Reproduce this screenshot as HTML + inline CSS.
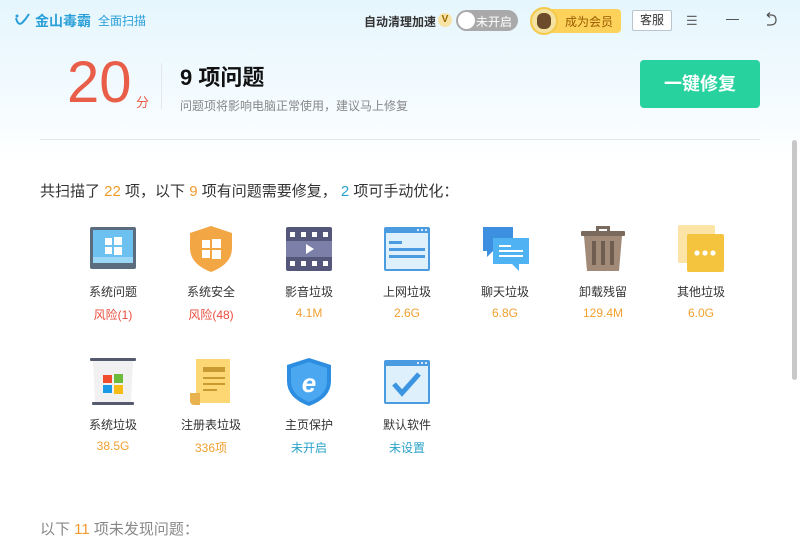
<!DOCTYPE html><html><head><meta charset="utf-8"><style>
*{margin:0;padding:0;box-sizing:border-box}
body{width:800px;height:560px;overflow:hidden;background:#fff;font-family:"Liberation Sans","Noto Sans CJK SC",sans-serif;position:relative}
.top{position:absolute;left:0;top:0;width:800px;height:160px;background:linear-gradient(#e6f6fd,#f3fbff 60%,#fff)}
.a{position:absolute;white-space:nowrap}
.it{position:absolute;width:98px;text-align:center}
.it svg{display:block;margin:0 auto;width:50px;height:50px}
.lb{font-size:12px;color:#333;margin-top:9px}
.v{font-size:12px;margin-top:6px}
</style></head><body>
<div class="top"></div>
<svg class="a" style="left:14px;top:12px" width="18" height="16" viewBox="0 0 18 16"><path d="M2 6 Q4 14 8 11 Q12 7 15 2" stroke="#2a9fd8" stroke-width="2" fill="none"/><circle cx="3" cy="4" r="1.5" fill="#2a9fd8"/></svg>
<div class="a" style="left:35px;top:11px;font-size:14px;color:#2a9fd8;font-weight:bold">金山毒霸</div>
<div class="a" style="left:98px;top:12px;font-size:12px;color:#2a9fd8">全面扫描</div>
<div class="a" style="left:364px;top:13px;font-size:12px;color:#333;font-weight:bold">自动清理加速</div>
<div class="a" style="left:438px;top:13px;width:14px;height:14px;border-radius:7px;background:#f7e3a6;color:#9a6a00;font-size:10px;text-align:center;line-height:14px;font-weight:bold">V</div>
<div class="a" style="left:456px;top:10px;width:62px;height:21px;border-radius:11px;background:#a9a9a9"></div>
<div class="a" style="left:458px;top:12px;width:17px;height:17px;border-radius:9px;background:#fff"></div>
<div class="a" style="left:476px;top:13px;font-size:12px;color:#fff">未开启</div>
<div class="a" style="left:540px;top:9px;width:81px;height:24px;border-radius:4px;background:#fcd25a"></div>
<div class="a" style="left:530px;top:7px;width:28px;height:28px;border-radius:14px;background:#f6e2a0;border:2px solid #f3c94a"><div style="width:14px;height:16px;margin:4px auto;background:#6b4b2a;border-radius:6px"></div></div>
<div class="a" style="left:565px;top:13px;font-size:12px;color:#9a5a00">成为会员</div>
<div class="a" style="left:632px;top:10px;width:40px;height:21px;border:1px solid #b9c6cf;border-radius:2px;font-size:12px;color:#333;text-align:center;line-height:19px;background:#fff">客服</div>
<div class="a" style="left:686px;top:13px;font-size:13px;color:#666">☰</div>
<div class="a" style="left:726px;top:19px;width:13px;height:1px;background:#555"></div>
<svg class="a" style="left:764px;top:12px" width="14" height="14" viewBox="0 0 14 14"><path d="M3 3 L7 3 Q12 3 12 8 Q12 13 6 13 L3 13 M3 3 L6 0.5 M3 3 L6 5.5" stroke="#555" fill="none" stroke-width="1.2"/></svg>

<div class="a" style="left:67px;top:50px;font-size:58px;color:#e95e48;line-height:66px">20</div>
<div class="a" style="left:136px;top:92px;font-size:13px;color:#e95e48">分</div>
<div class="a" style="left:161px;top:63px;width:1px;height:46px;background:#e4e8ec"></div>
<div class="a" style="left:180px;top:60px;font-size:22px;color:#111;font-weight:bold">9 项问题</div>
<div class="a" style="left:180px;top:97px;font-size:12px;color:#888">问题项将影响电脑正常使用，建议马上修复</div>
<div class="a" style="left:640px;top:60px;width:120px;height:48px;border-radius:4px;background:#27d29e;color:#fff;font-size:18px;font-weight:bold;text-align:center;line-height:48px">一键修复</div>
<div class="a" style="left:40px;top:139px;width:720px;height:1px;background:#e4e8ec"></div>
<div class="a" style="left:792px;top:140px;width:5px;height:240px;border-radius:3px;background:#c8c8c8"></div>

<div class="a" style="left:40px;top:180px;font-size:15px;color:#333">共扫描了 <span style="color:#f09a2d">22</span> 项，以下 <span style="color:#f09a2d">9</span> 项有问题需要修复， <span style="color:#2aa2c8">2</span> 项可手动优化：</div>

<div class="it" style="left:64px;top:224px"><svg viewBox="0 0 50 50"><rect x="2" y="3" width="46" height="42" rx="2" fill="#5a6c7d"/><rect x="5" y="6" width="40" height="33" fill="#6cc1f0"/><rect x="5" y="33" width="40" height="6" fill="#9ad6f6"/><path d="M17 14h7v7h-7zM26 13h8v8h-8zM17 23h7v7h-7zM26 23h8v8h-8z" fill="#fff"/></svg><div class="lb">系统问题</div><div class="v" style="color:#e84c3d">风险(1)</div></div>
<div class="it" style="left:162px;top:224px"><svg viewBox="0 0 50 50"><path d="M25 2 L46 9 V24 Q46 40 25 48 Q4 40 4 24 V9Z" fill="#f2a744"/><path d="M16 16h8v8h-8zM26 15h9v9h-9zM16 26h8v8h-8zM26 26h9v9h-9z" fill="#fff"/></svg><div class="lb">系统安全</div><div class="v" style="color:#e84c3d">风险(48)</div></div>
<div class="it" style="left:260px;top:224px"><svg viewBox="0 0 50 50"><rect x="2" y="3" width="46" height="44" rx="2" fill="#55577a"/><rect x="2" y="17" width="46" height="16" fill="#7c7fa8"/><path d="M6 8h5v5H6zM17 8h5v5h-5zM28 8h5v5h-5zM39 8h5v5h-5zM6 37h5v5H6zM17 37h5v5h-5zM28 37h5v5h-5zM39 37h5v5h-5z" fill="#fff"/><path d="M22 20 L30 25 L22 30Z" fill="#fff"/></svg><div class="lb">影音垃圾</div><div class="v" style="color:#f0a030">4.1M</div></div>
<div class="it" style="left:358px;top:224px"><svg viewBox="0 0 50 50"><rect x="2" y="3" width="46" height="44" rx="2" fill="#4a9be0"/><rect x="4" y="9" width="42" height="36" fill="#dff0fd"/><path d="M7 17h13v3H7zM7 24h36v3H7zM7 31h36v3H7z" fill="#4a9be0"/><circle cx="36" cy="6" r="1" fill="#fff"/><circle cx="40" cy="6" r="1" fill="#fff"/><circle cx="44" cy="6" r="1" fill="#fff"/></svg><div class="lb">上网垃圾</div><div class="v" style="color:#f0a030">2.6G</div></div>
<div class="it" style="left:456px;top:224px"><svg viewBox="0 0 50 50"><path d="M3 3h30v24H13l-6 6v-6H3z" fill="#3d8fe0"/><path d="M13 14h36v26h-10l0 7-7-7H13z" fill="#4fb3f3"/><path d="M19 21h12v2H19zM19 26h24v2H19zM19 31h24v2H19z" fill="#fff"/></svg><div class="lb">聊天垃圾</div><div class="v" style="color:#f0a030">6.8G</div></div>
<div class="it" style="left:554px;top:224px"><svg viewBox="0 0 50 50"><path d="M18 2h14v5h-3V5h-8v2h-3z" fill="#7a6a5e"/><rect x="3" y="7" width="44" height="5" rx="1" fill="#7a6a5e"/><path d="M6 12h38l-3 35H9z" fill="#a18a78"/><path d="M14 17h4v24h-4zM23 17h4v24h-4zM32 17h4v24h-4z" fill="#6e5d50"/></svg><div class="lb">卸载残留</div><div class="v" style="color:#f0a030">129.4M</div></div>
<div class="it" style="left:652px;top:224px"><svg viewBox="0 0 50 50"><rect x="2" y="1" width="37" height="38" rx="2" fill="#fbe4a6"/><rect x="11" y="10" width="37" height="38" rx="2" fill="#f5c43f"/><circle cx="21" cy="29" r="2.6" fill="#fff"/><circle cx="29" cy="29" r="2.6" fill="#fff"/><circle cx="37" cy="29" r="2.6" fill="#fff"/></svg><div class="lb">其他垃圾</div><div class="v" style="color:#f0a030">6.0G</div></div>

<div class="it" style="left:64px;top:357px"><svg viewBox="0 0 50 50"><rect x="2" y="1" width="46" height="3" rx="1" fill="#555a6e"/><path d="M5 4h40l-2 41H7z" fill="#f1f1f1"/><rect x="4" y="45" width="42" height="3" rx="1" fill="#555a6e"/><path d="M15 18h9v8h-9z" fill="#ef4d2b"/><path d="M26 17h9v9h-9z" fill="#6cbb3a"/><path d="M15 28h9v8h-9z" fill="#1a9ae6"/><path d="M26 28h9v9h-9z" fill="#f7bb16"/></svg><div class="lb">系统垃圾</div><div class="v" style="color:#f0a030">38.5G</div></div>
<div class="it" style="left:162px;top:357px"><svg viewBox="0 0 50 50"><path d="M10 2h34v44H10z" fill="#fcd774"/><path d="M4 36h10v12H8a4 4 0 0 1-4-4z" fill="#e8b34e"/><path d="M17 10h22v5H17zM17 20h22v2H17zM17 26h22v2H17zM17 32h14v2H17z" fill="#c99a32"/></svg><div class="lb">注册表垃圾</div><div class="v" style="color:#f0a030">336项</div></div>
<div class="it" style="left:260px;top:357px"><svg viewBox="0 0 50 50"><path d="M25 1 L47 8 V24 Q47 41 25 49 Q3 41 3 24 V8Z" fill="#2d8de0"/><path d="M25 5 L43 11 V24 Q43 38 25 45 Q7 38 7 24 V11Z" fill="#4aa7f0"/><text x="25" y="35" text-anchor="middle" font-size="26" font-style="italic" font-weight="bold" fill="#fff" font-family="Liberation Sans,sans-serif">e</text></svg><div class="lb">主页保护</div><div class="v" style="color:#2aa2c8">未开启</div></div>
<div class="it" style="left:358px;top:357px"><svg viewBox="0 0 50 50"><rect x="2" y="3" width="46" height="44" rx="2" fill="#4a9be0"/><rect x="4" y="9" width="42" height="36" fill="#dff0fd"/><path d="M12 27 L20 36 L37 17" stroke="#3c95e0" stroke-width="5" fill="none"/><circle cx="36" cy="6" r="1" fill="#fff"/><circle cx="40" cy="6" r="1" fill="#fff"/><circle cx="44" cy="6" r="1" fill="#fff"/></svg><div class="lb">默认软件</div><div class="v" style="color:#2aa2c8">未设置</div></div>

<div class="a" style="left:40px;top:518px;font-size:15px;color:#888">以下 <span style="color:#f09a2d">11</span> 项未发现问题：</div>
</body></html>
